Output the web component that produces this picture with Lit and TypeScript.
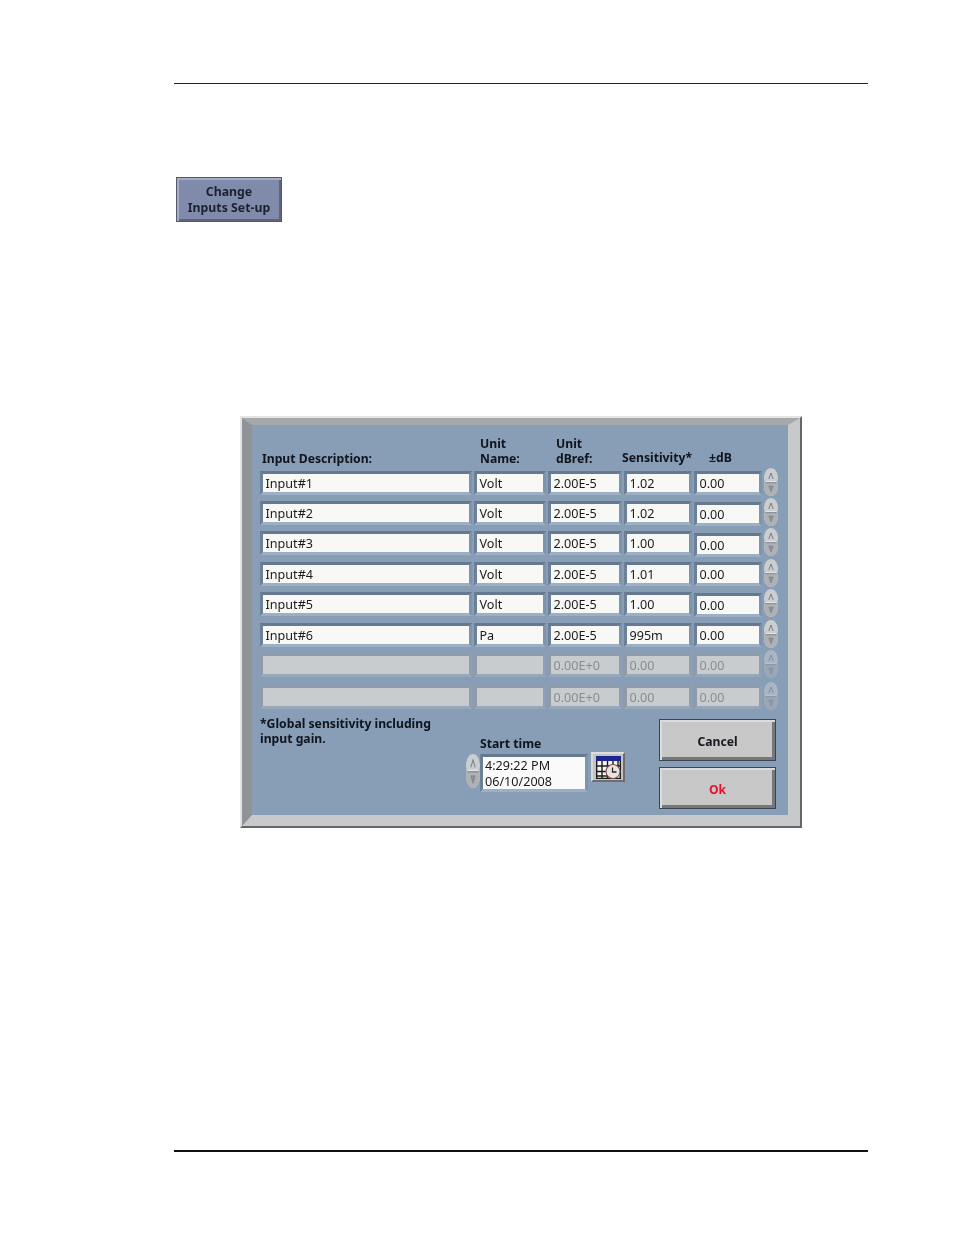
import { LitElement, html, css, svg } from "lit";
import { customElement } from "lit/decorators.js";

interface Row { desc: string; unit: string; ref: string; sens: string; db: string; off: number; pitch: number; dis?: boolean }
const rows: Row[] = [
  { desc: "Input#1", unit: "Volt", ref: "2.00E-5", sens: "1.02", db: "0.00", off: 0, pitch: 30 },
  { desc: "Input#2", unit: "Volt", ref: "2.00E-5", sens: "1.02", db: "0.00", off: 1, pitch: 30 },
  { desc: "Input#3", unit: "Volt", ref: "2.00E-5", sens: "1.00", db: "0.00", off: 2, pitch: 31 },
  { desc: "Input#4", unit: "Volt", ref: "2.00E-5", sens: "1.01", db: "0.00", off: 0, pitch: 30 },
  { desc: "Input#5", unit: "Volt", ref: "2.00E-5", sens: "1.00", db: "0.00", off: 1, pitch: 31 },
  { desc: "Input#6", unit: "Pa", ref: "2.00E-5", sens: "995m", db: "0.00", off: 0, pitch: 30 },
  { desc: "", unit: "", ref: "0.00E+0", sens: "0.00", db: "0.00", off: 0, pitch: 32, dis: true },
  { desc: "", unit: "", ref: "0.00E+0", sens: "0.00", db: "0.00", off: 0, pitch: 24, dis: true },
];

const spinner = (dis = false) => svg`<svg class="spin" viewBox="0 0 14 28" preserveAspectRatio="none" style="opacity:${dis ? 0.5 : 1}">
  <path d="M7 0C11 0 13.5 4 14 9C14 11 13.600 13 13.200 14C13.600 15 14 17 14 19C13.500 24 11 28 7 28C3 28 0.500 24 0 19C0 17 0.400 15 0.800 14C0.400 13 0 11 0 9C0.500 4 3 0 7 0Z" fill="#cbced1"/>
  <path d="M0.800 14C0.400 15 0 17 0 19C0.500 24 3 28 7 28C11 28 13.500 24 14 19C14 17 13.600 15 13.200 14Z" fill="#aeb2b6"/>
  <path d="M1.500 13.500H12.500" stroke="#e4e5e6" stroke-width="1"/>
  <path d="M1.500 14.700H12.500" stroke="#868b8f" stroke-width="1"/>
  <path d="M4.800 11L7 5L9.200 11" fill="none" stroke="#7a7f85" stroke-width="1"/>
  <path d="M4.800 18H9.200L7 24Z" fill="#8f9398" stroke="#7a7f85" stroke-width="0.600"/>
</svg>`;

const calendar = svg`<svg viewBox="0 0 25 23" width="25" height="23">
  <rect x="0" y="0" width="25" height="5" fill="#1d2690"/>
  <rect x="0" y="5" width="25" height="18" fill="#f6f6f6"/>
  <path d="M0.700 5V22.500H24.300V5M6 5V22.500M11.500 5V22.500M17 5V12M22 5V12M0.700 10H24.300M0.700 15.500H13M0.700 20H13" fill="none" stroke="#1c1c1c" stroke-width="1.400"/>
  <circle cx="17" cy="15.500" r="7" fill="#e9e4e0" stroke="#8c4e50" stroke-width="1.100"/>
  <path d="M16.500 11.500V16H20.500" fill="none" stroke="#2a2a2a" stroke-width="1.300"/>
</svg>`;

@customElement("app-root")
export class AppRoot extends LitElement {
  static styles = css`
    :host { display: block; height: 1235px; background: #fff; font-family: "Noto Sans", "Open Sans", sans-serif; overflow: hidden; }
    .rule-top { margin: 83px 0 0 174px; width: 694px; height: 1px; background: #222; }
    .rule-bottom { margin: 322px 0 0 174px; width: 694px; height: 2px; background: #111; }
    .change { margin: 93px 0 0 176px; width: 106px; height: 45px; box-sizing: border-box; display: flex; align-items: center; justify-content: center; text-align: center;
      font-size: 12.3px; font-weight: 700; line-height: 16px; color: #1c2030; background: #808bab;
      border: 1px solid #555a68; box-shadow: inset 2px 2px 0 #a5adc4, inset -2px -2px 0 #5f6578; filter: blur(.5px); }
    .dialog { margin: 194px 0 0 240px; width: 562px; height: 412px; box-sizing: border-box; border: 2px solid; border-color: #e4e4e4 #666 #666 #e4e4e4; filter: blur(.45px); }
    .frame { height: 100%; box-sizing: border-box; border-style: solid; border-width: 7px 12px 11px 10px; border-color: #a6a8aa #c8c9ca #c8c9ca #8f9296; }
    .panel { height: 390px; background: #889db6; padding-left: 8px; color: #10141c; font-size: 12.2px; }
    .grid { display: grid; grid-template-columns: 212px 72px 74px 68px 68px 14px; column-gap: 2px; }
    .head { height: 46px; font-weight: 700; line-height: 15px; box-sizing: border-box; padding-bottom: 5px; align-items: end; }
    .head .h1 { padding-left: 2px; }
    .head .h2 { padding-left: 6px; }
    .head .h3 { padding-left: 8px; }
    .head .h4 { margin-left: -2px; padding-bottom: 1px; white-space: nowrap; }
    .head .h5 { padding-left: 15px; padding-bottom: 1px; }
    .row { align-items: start; }
    .field { height: 24px; box-sizing: border-box; border: 3px solid; border-color: #66798f #7f93aa #9cafc3 #6c8097; background: #f8f8f6; line-height: 20px; padding-left: 2.5px; color: #1a1a1a; white-space: nowrap; overflow: hidden; font-size: 12.6px; }
    .dis .field { background: #c9cccf; border-color: #8f9ba9 #90a0b2 #98a8ba #8f9ba9; color: #878d93; }
    .spin { display: block; width: 14px; height: 28px; margin-top: -3px; }
    .footer { display: flex; align-items: flex-start; height: 106px; }
    .note { width: 206px; margin-top: 7px; font-weight: 700; line-height: 15px; }
    .time { width: 122px; margin-top: 27px; }
    .time-label { margin-left: 14px; height: 18px; line-height: 15px; font-weight: 700; }
    .time-row { display: flex; }
    .time-row .spin { width: 14px; height: 34px; margin-top: 0; flex: none; }
    .time-field { width: 108px; height: 38px; box-sizing: border-box; border: 3px solid; border-color: #66798f #7f93aa #9cafc3 #6c8097; background: #fafafa; padding-left: 2px; line-height: 16px; color: #1a1a1a; font-size: 12.6px; padding-top: 1px; }
    .cal { width: 34px; height: 30px; margin: 43px 0 0 3px; box-sizing: border-box; display: flex; align-items: center; justify-content: center; background: #c4c4c4;
      border: 2px solid; border-color: #dedede #6e6e6e #6e6e6e #dadada; }
    .buttons { margin: 10px 0 0 34px; display: flex; flex-direction: column; gap: 6px; }
    .btn { width: 117px; height: 42px; box-sizing: border-box; display: flex; align-items: center; justify-content: center; font-weight: 700; background: #c8c8c8; padding-top: 3px;
      border: 1px solid #3a4552; box-shadow: inset 2px 2px 0 #dcdcdc, inset -3px -3px 0 #75777a; color: #15181e; }
    .ok { color: #e8112d; }
  `;

  render() {
    return html`
      <div class="rule-top"></div>
      <div class="change"><div>Change<br />Inputs Set-up</div></div>
      <div class="dialog"><div class="frame"><div class="panel">
        <div class="grid head">
          <div class="h1">Input Description:</div>
          <div class="h2">Unit<br />Name:</div>
          <div class="h3">Unit<br />dBref:</div>
          <div class="h4">Sensitivity*</div>
          <div class="h5">±dB</div>
        </div>
        ${rows.map((r) => html`
          <div class="grid row ${r.dis ? "dis" : ""}" style="height:${r.pitch}px">
            <div class="field">${r.desc}</div>
            <div class="field">${r.unit}</div>
            <div class="field">${r.ref}</div>
            <div class="field">${r.sens}</div>
            <div class="field" style="margin-top:${r.off}px">${r.db}</div>
            ${spinner(r.dis)}
          </div>`)}
        <div class="footer">
          <div class="note">*Global sensitivity including<br />input gain.</div>
          <div class="time">
            <div class="time-label">Start time</div>
            <div class="time-row">
              ${spinner()}
              <div class="time-field">4:29:22 PM<br />06/10/2008</div>
            </div>
          </div>
          <div class="cal">${calendar}</div>
          <div class="buttons">
            <div class="btn">Cancel</div>
            <div class="btn ok">Ok</div>
          </div>
        </div>
      </div></div></div>
      <div class="rule-bottom"></div>
    `;
  }
}
